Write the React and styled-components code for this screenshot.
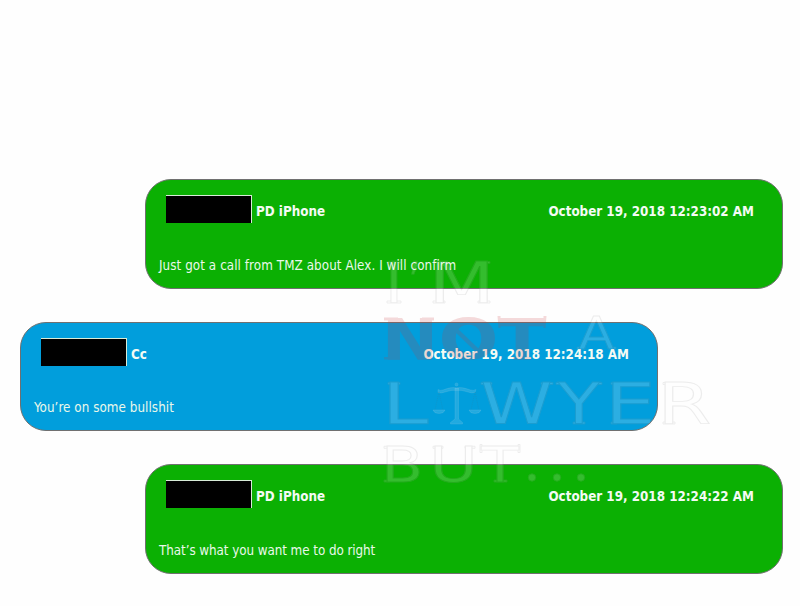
import React from 'react'
import styled, { createGlobalStyle } from 'styled-components'

const messages = [
  {
    id: 1,
    side: 'right',
    name: 'PD iPhone',
    time: 'October 19, 2018 12:23:02 AM',
    text: 'Just got a call from TMZ about Alex. I will confirm',
    spacing: 0.07
  },
  {
    id: 2,
    side: 'left',
    name: 'Cc',
    time: 'October 19, 2018 12:24:18 AM',
    text: 'You’re on some bullshit',
    spacing: 0.05
  },
  {
    id: 3,
    side: 'right',
    name: 'PD iPhone',
    time: 'October 19, 2018 12:24:22 AM',
    text: 'That’s what you want me to do right',
    spacing: -0.06
  }
]

// every letter is stretched on its own to get the wide engraved face
const letters = [
  { t: 'I', x: 385, y: 303, w: 17.9, size: 57 },
  { t: '’', x: 408, y: 303, w: 13, size: 57 },
  { t: 'M', x: 428.5, y: 303, w: 66.2, size: 57 },
  { t: 'A', x: 578.6, y: 349, w: 35.8, size: 45 },
  { t: 'L', x: 381.8, y: 424, w: 46.7, size: 57 },
  { t: 'W', x: 480.6, y: 424, w: 71.9, size: 57 },
  { t: 'Y', x: 558, y: 424, w: 41.7, size: 57 },
  { t: 'E', x: 605, y: 424, w: 50.7, size: 57 },
  { t: 'R', x: 657.4, y: 424, w: 53.8, size: 57 },
  { t: 'B', x: 381, y: 482, w: 42.5, size: 49 },
  { t: 'U', x: 429.2, y: 482, w: 48.5, size: 49 },
  { t: 'T', x: 481.2, y: 482, w: 37.6, size: 49 }
]

const redLetters = [
  { t: 'N', x: 381.8, w: 56.4 },
  { t: 'O', x: 438.5, w: 60 },
  { t: 'T', x: 498.7, w: 46.7 }
]

const App = () => {
  return (
    <Page>
      <GlobalStyle />
      {messages.map(m => (
        <Bubble key={m.id} $side={m.side}>
          <Header>
            <Sender>
              <Redacted />
              <Name>{m.name}</Name>
            </Sender>
            <Time>{m.time}</Time>
          </Header>
          <Body $side={m.side} $spacing={m.spacing}>{m.text}</Body>
        </Bubble>
      ))}
      <Watermark viewBox="0 0 800 606">
        <g fill="#fff" stroke="#999" strokeWidth="0.9" opacity="0.17">
          <Serifs />
          {letters.map((l, i) => (
            <text key={i} x={l.x} y={l.y} fontSize={l.size} textLength={l.w} lengthAdjust="spacingAndGlyphs">
              {l.t}
            </text>
          ))}
          <circle cx="532" cy="477.5" r="3.7" />
          <circle cx="557" cy="477.5" r="3.7" />
          <circle cx="581" cy="477.5" r="3.7" />
        </g>
        <g fill="#c8383c" opacity="0.18" fontWeight="bold">
          {redLetters.map(l => (
            <text key={l.t} x={l.x} y="359.5" fontSize="57.5" textLength={l.w} lengthAdjust="spacingAndGlyphs">
              {l.t}
            </text>
          ))}
          <path d="M384 317.500h14v3h-14zM422 317.500h12v3h-12zM384 357h16v2.500h-16zM497.500 316h3v12h-2zM543.500 316h3l-1 12h-2zM513 357h18v2.500h-18z" />
          <path d="M456 327l24 23-3 3-24-23z" />
        </g>
        <Scales />
      </Watermark>
    </Page>
  )
}
export default App

const Serifs = () => (
  <path d="M387 261.500h14v2h-14zM387 301h14v2h-14zM433 261.500h11v2h-11zM479 261.500h11v2h-11zM433 301h12v2h-12zM478 301h12v2h-12zM577 347h8v2h-8zM608 347h8v2h-8zM388 382.500h12v2h-12zM481 382.500h11v2h-11zM541 382.500h12v2h-12zM556 382.500h9v2h-9zM593 382.500h9v2h-9zM573 422h12v2h-12zM611 382.500h6v2h-6zM611 422h6v2h-6zM663 382.500h6v2h-6zM663 422h12v2h-12zM384 446.300h6v2h-6zM384 480h6v2h-6zM433 446.300h10v2h-10zM465 446.300h10v2h-10zM480 444.500h2v8h-2zM518 444.500h2v8h-2zM494 480h13v2h-13z" />
)

const Scales = () => (
  <g fill="#fff" fillOpacity="0.13" stroke="#8cc4dc" strokeOpacity="0.3" strokeWidth="0.7">
    <circle cx="456.5" cy="384.5" r="1.5" />
    <path d="M455 388h3.500v31l4 3.500v1.500h-12v-1.500l4.500-3.500z" />
    <path d="M438 389.500q2 1.500 5 .5q9 -3.500 13.500 -2q4.500 -1.500 14 2q3 1 5.500 -.5l-1 3q-3 1 -7 -.5q-7 -2.500 -11.500 -1.500q-4.500 -1 -11.500 1.500q-4 1.500 -7 .5z" />
    <path d="M439 392l-4 18M439 392l4 18M475 392l-4 18M475 392l4 18" fill="none" stroke="#3c7890" strokeDasharray="1 1" />
    <path d="M433 410h12q-1 3.500 -6 3.500t-6 -3.500zM469 410h12q-1 3.500 -6 3.500t-6 -3.500z" />
  </g>
)

const GlobalStyle = createGlobalStyle`
  body {
    margin: 0;
    background: #fff;
  }
`

const Page = styled.div`
  position: relative;
  box-sizing: border-box;
  width: 800px;
  height: 606px;
  padding: 179px 17px 0 20px;
  display: flex;
  flex-direction: column;
  gap: 33px;
  overflow: hidden;
  background: #fefefe;
  font-family: 'DejaVu Sans Condensed', 'DejaVu Sans', sans-serif;
  font-stretch: condensed;
`

const Bubble = styled.div`
  box-sizing: border-box;
  width: 638px;
  height: 109.5px;
  padding: 15px 28px 0 20px;
  align-self: ${p => (p.$side === 'right' ? 'flex-end' : 'flex-start')};
  border: 1px solid #707070;
  border-radius: 26px;
  background: ${p => (p.$side === 'right' ? '#0bb003' : '#019edc')};
  color: #f4fbf4;
`

const Header = styled.div`
  display: flex;
  justify-content: space-between;
  align-items: center;
  height: 28px;
`

const Sender = styled.div`
  display: flex;
  align-items: center;
`

const Redacted = styled.div`
  box-sizing: border-box;
  width: 86px;
  height: 28px;
  margin-right: 4px;
  border: solid #d8ecd8;
  border-width: 1px 1px 0 0;
  background: #000;
`

const Name = styled.span`
  padding-top: 6px;
  font-size: 13.3px;
  font-weight: bold;
  line-height: 18px;
`

const Time = styled(Name)`
  white-space: nowrap;
`

const Body = styled.p`
  margin: ${p => (p.$side === 'right' ? 33 : 32)}px 0 0 -7px;
  font-size: 13.3px;
  letter-spacing: ${p => p.$spacing}px;
  line-height: 20px;
  color: #e9f8ea;
`

const Watermark = styled.svg`
  position: absolute;
  left: 0;
  top: 0;
  width: 800px;
  height: 606px;
  pointer-events: none;
  font-family: 'DejaVu Sans', sans-serif;
  font-stretch: normal;
`
